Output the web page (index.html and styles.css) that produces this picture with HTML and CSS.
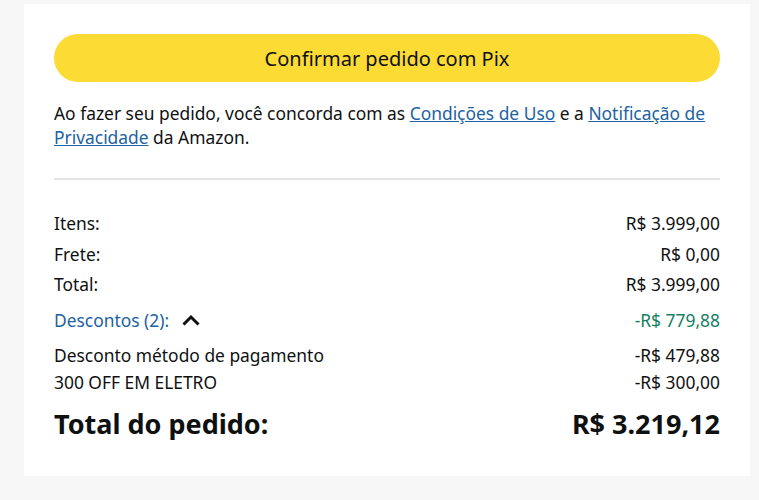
FILE: index.html
```html
<!DOCTYPE html>
<html lang="pt-BR">
<head>
    <meta charset="UTF-8">
    <meta name="viewport" content="width=device-width, initial-scale=1.0">
    <title>Finalizar pedido</title>
    <link rel="stylesheet" href="styles.css">
</head>
<body>
    <div class="card">
        <button class="confirm">Confirmar pedido com Pix</button>
        <p class="legal">
            Ao fazer seu pedido, você concorda com as <a href="#">Condições de Uso</a> e a <a href="#">Notificação de Privacidade</a> da Amazon.
        </p>
        <hr class="divider">
        <div class="summary">
            <div class="row"><span>Itens:</span><span>R$ 3.999,00</span></div>
            <div class="row"><span>Frete:</span><span>R$ 0,00</span></div>
            <div class="row"><span>Total:</span><span>R$ 3.999,00</span></div>
            <div class="row discounts">
                <span class="toggle">Descontos (2):
                    <svg class="chevron" width="18" height="12" viewBox="0 0 18 12">
                        <path d="M1.5 10.5 L9 3 L16.5 10.5" fill="none" stroke="#0f1111" stroke-width="3"/>
                    </svg>
                </span>
                <span class="green">-R$ 779,88</span>
            </div>
            <div class="row sub"><span>Desconto método de pagamento</span><span>-R$ 479,88</span></div>
            <div class="row sub"><span>300 OFF EM ELETRO</span><span>-R$ 300,00</span></div>
            <div class="row grand"><span>Total do pedido:</span><span>R$ 3.219,12</span></div>
        </div>
    </div>
</body>
</html>
```

FILE: styles.css
```css
body {
    margin: 0;
    padding: 4px 9px 25px 24px;
    background-color: #f7f7f7;
    font-family: "Noto Sans", Arial, sans-serif;
    color: #0f1111;
}

.card {
    background-color: #fff;
    padding: 30px 30px 25px 30px;
}

.confirm {
    display: block;
    width: 100%;
    height: 48px;
    border: none;
    border-radius: 24px;
    background-color: #fcdb35;
    font-family: inherit;
    font-size: 20px;
    color: #0f1111;
    cursor: pointer;
}

.legal {
    margin: 19px 0 0 0;
    font-size: 17.4px;
    line-height: 24px;
}

.legal a {
    color: #2162a1;
}

.divider {
    border: none;
    border-top: 2px solid #e3e3e3;
    margin: 29px 0 28px 0;
}

.row {
    display: flex;
    justify-content: space-between;
    align-items: center;
    font-size: 17.4px;
    height: 30.5px;
}

.discounts {
    height: 40px;
    margin-bottom: 2px;
}

.toggle {
    color: #2162a1;
    display: flex;
    align-items: center;
    gap: 13px;
}

.green {
    color: #138062;
}

.sub {
    height: 27px;
}

.grand {
    font-size: 27px;
    font-weight: bold;
    height: 55px;
}
```
